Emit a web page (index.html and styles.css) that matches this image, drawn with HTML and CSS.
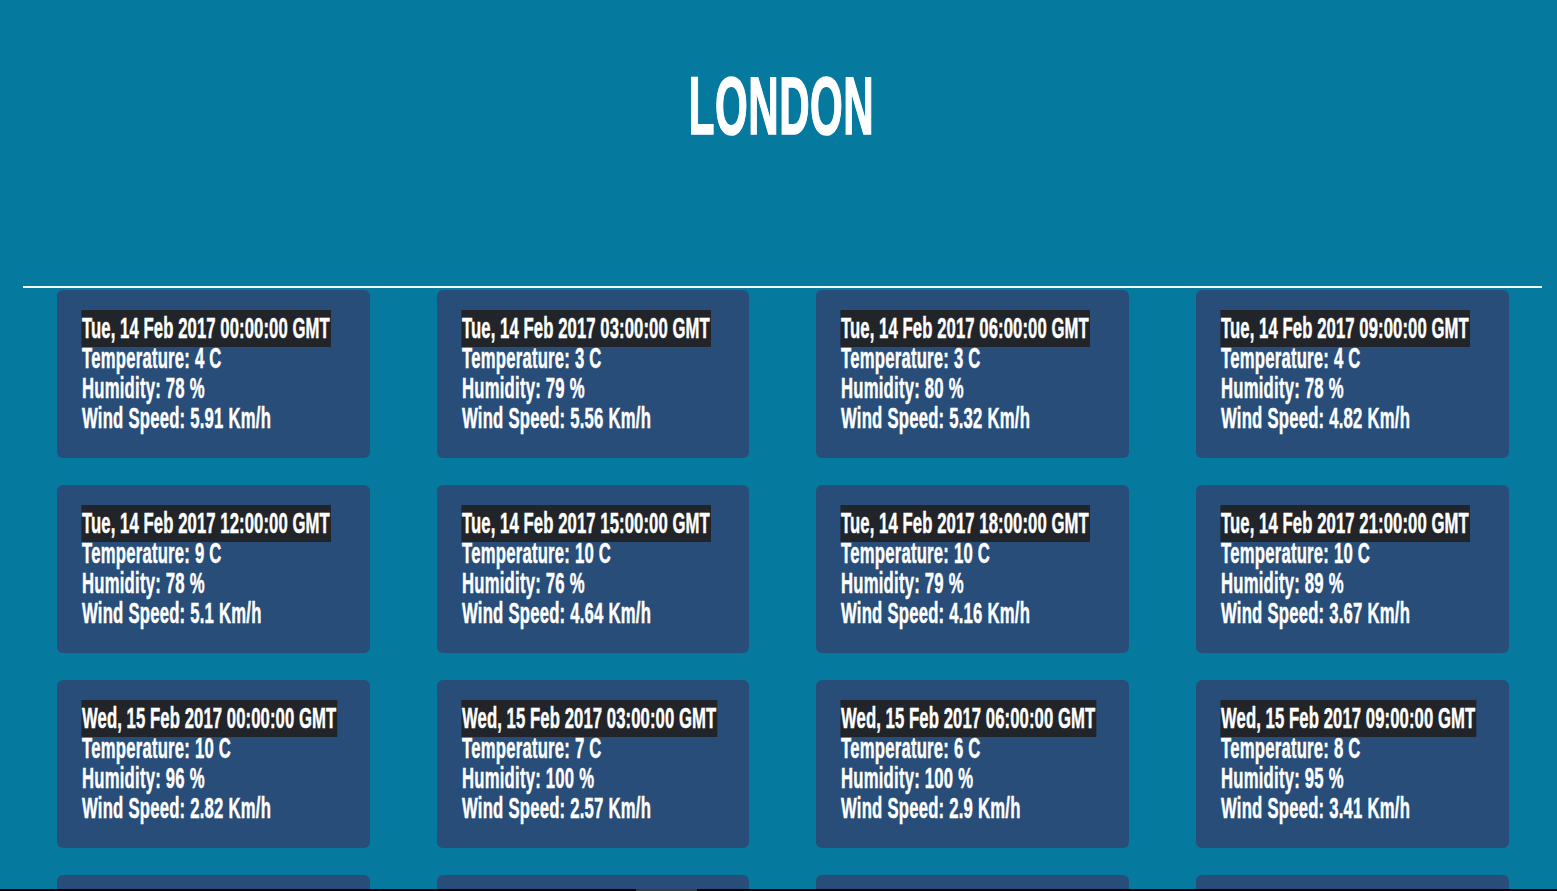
FILE: index.html
```html
<!DOCTYPE html>
<html lang="en">
<head>
<meta charset="utf-8">
<title>London Weather</title>
<link rel="stylesheet" href="styles.css">
</head>
<body>
<header class="header">
  <h1 class="city"><span class="city-text">LONDON</span></h1>
</header>
<main class="container">
  <hr class="divider">
  <section class="grid">
    <div class="card"><div class="card-text"><div class="line"><span class="date">Tue, 14 Feb 2017 00:00:00 GMT</span></div><div class="line">Temperature: 4 C</div><div class="line">Humidity: 78 %</div><div class="line">Wind Speed: 5.91 Km/h</div></div></div>
    <div class="card"><div class="card-text"><div class="line"><span class="date">Tue, 14 Feb 2017 03:00:00 GMT</span></div><div class="line">Temperature: 3 C</div><div class="line">Humidity: 79 %</div><div class="line">Wind Speed: 5.56 Km/h</div></div></div>
    <div class="card"><div class="card-text"><div class="line"><span class="date">Tue, 14 Feb 2017 06:00:00 GMT</span></div><div class="line">Temperature: 3 C</div><div class="line">Humidity: 80 %</div><div class="line">Wind Speed: 5.32 Km/h</div></div></div>
    <div class="card"><div class="card-text"><div class="line"><span class="date">Tue, 14 Feb 2017 09:00:00 GMT</span></div><div class="line">Temperature: 4 C</div><div class="line">Humidity: 78 %</div><div class="line">Wind Speed: 4.82 Km/h</div></div></div>
    <div class="card"><div class="card-text"><div class="line"><span class="date">Tue, 14 Feb 2017 12:00:00 GMT</span></div><div class="line">Temperature: 9 C</div><div class="line">Humidity: 78 %</div><div class="line">Wind Speed: 5.1 Km/h</div></div></div>
    <div class="card"><div class="card-text"><div class="line"><span class="date">Tue, 14 Feb 2017 15:00:00 GMT</span></div><div class="line">Temperature: 10 C</div><div class="line">Humidity: 76 %</div><div class="line">Wind Speed: 4.64 Km/h</div></div></div>
    <div class="card"><div class="card-text"><div class="line"><span class="date">Tue, 14 Feb 2017 18:00:00 GMT</span></div><div class="line">Temperature: 10 C</div><div class="line">Humidity: 79 %</div><div class="line">Wind Speed: 4.16 Km/h</div></div></div>
    <div class="card"><div class="card-text"><div class="line"><span class="date">Tue, 14 Feb 2017 21:00:00 GMT</span></div><div class="line">Temperature: 10 C</div><div class="line">Humidity: 89 %</div><div class="line">Wind Speed: 3.67 Km/h</div></div></div>
    <div class="card"><div class="card-text"><div class="line"><span class="date">Wed, 15 Feb 2017 00:00:00 GMT</span></div><div class="line">Temperature: 10 C</div><div class="line">Humidity: 96 %</div><div class="line">Wind Speed: 2.82 Km/h</div></div></div>
    <div class="card"><div class="card-text"><div class="line"><span class="date">Wed, 15 Feb 2017 03:00:00 GMT</span></div><div class="line">Temperature: 7 C</div><div class="line">Humidity: 100 %</div><div class="line">Wind Speed: 2.57 Km/h</div></div></div>
    <div class="card"><div class="card-text"><div class="line"><span class="date">Wed, 15 Feb 2017 06:00:00 GMT</span></div><div class="line">Temperature: 6 C</div><div class="line">Humidity: 100 %</div><div class="line">Wind Speed: 2.9 Km/h</div></div></div>
    <div class="card"><div class="card-text"><div class="line"><span class="date">Wed, 15 Feb 2017 09:00:00 GMT</span></div><div class="line">Temperature: 8 C</div><div class="line">Humidity: 95 %</div><div class="line">Wind Speed: 3.41 Km/h</div></div></div>
    <div class="card"><div class="card-text"><div class="line"><span class="date">Wed, 15 Feb 2017 12:00:00 GMT</span></div><div class="line">Temperature: 11 C</div><div class="line">Humidity: 88 %</div><div class="line">Wind Speed: 3.62 Km/h</div></div></div>
    <div class="card"><div class="card-text"><div class="line"><span class="date">Wed, 15 Feb 2017 15:00:00 GMT</span></div><div class="line">Temperature: 12 C</div><div class="line">Humidity: 82 %</div><div class="line">Wind Speed: 3.96 Km/h</div></div></div>
    <div class="card"><div class="card-text"><div class="line"><span class="date">Wed, 15 Feb 2017 18:00:00 GMT</span></div><div class="line">Temperature: 10 C</div><div class="line">Humidity: 90 %</div><div class="line">Wind Speed: 3.21 Km/h</div></div></div>
    <div class="card"><div class="card-text"><div class="line"><span class="date">Wed, 15 Feb 2017 21:00:00 GMT</span></div><div class="line">Temperature: 9 C</div><div class="line">Humidity: 94 %</div><div class="line">Wind Speed: 2.76 Km/h</div></div></div>
  </section>
</main>
<div class="bottom-edge"><span class="edge-thumb"></span></div>
</body>
</html>
```
FILE: styles.css
```css
html, body {
  margin: 0;
  padding: 0;
}
body {
  background: #05799e;
  color: #ffffff;
  font-family: "Liberation Sans", Arial, sans-serif;
  font-weight: bold;
}
.header {
  padding-top: 66px;
  height: 220px;
  box-sizing: border-box;
  display: flex;
  justify-content: center;
  padding-left: 6px;
}
.city {
  margin: 0;
  font-size: 81px;
  line-height: 81px;
  font-weight: bold;
  height: 81px;
  width: 184px;
  display: flex;
  justify-content: center;
}
.city-text {
  display: inline-block;
  transform: scaleX(0.52);
  transform-origin: 50% 0;
  white-space: nowrap;
  letter-spacing: 1px;
  -webkit-text-stroke: 1.6px #ffffff;
}
.container {
  margin-left: 23px;
  width: 1520px;
}
.divider {
  margin: 66px 0 0 0;
  border: 0;
  height: 2px;
  background: #f2f6f8;
  width: 1519px;
}
.grid {
  margin-top: 2px;
  padding-left: 34px;
  display: grid;
  grid-template-columns: repeat(4, 312.6px);
  column-gap: 67.1px;
  row-gap: 27px;
}
.card {
  background: #284d78;
  border-radius: 6px;
  height: 168px;
  box-sizing: border-box;
  padding: 23px 0 0 25px;
  overflow: hidden;
}
.card-text {
  transform: scaleX(0.575);
  transform-origin: 0 0;
  white-space: nowrap;
  font-size: 29px;
  line-height: 30px;
  letter-spacing: 0.4px;
  width: 460px;
  -webkit-text-stroke: 0.5px #ffffff;
}
.line {
  height: 30px;
}
.date {
  background: #212529;
  padding: 2px 2px 3px 1px;
  margin-left: -1px;
  letter-spacing: 0.15px;
}
.bottom-edge {
  position: fixed;
  left: 0;
  right: 0;
  bottom: 0;
  height: 2px;
  background: #050505;
}
.edge-thumb {
  position: absolute;
  left: 636px;
  width: 61px;
  top: 0;
  height: 2px;
  background: #3a3a3a;
}
```
